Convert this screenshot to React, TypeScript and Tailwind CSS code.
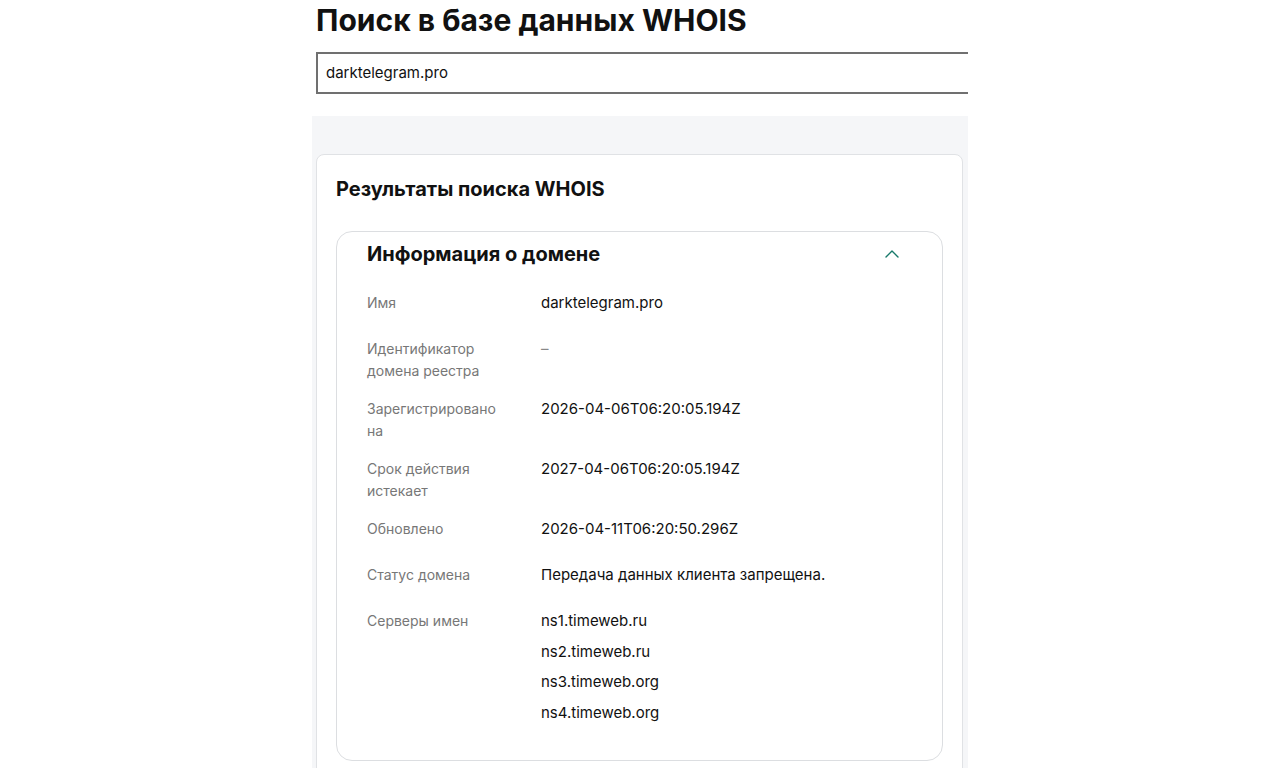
import { ChevronUp } from 'lucide-react';

const rows: { label: string; value: string[] }[] = [
  { label: 'Имя', value: ['darktelegram.pro'] },
  { label: 'Идентификатор домена реестра', value: ['–'] },
  { label: 'Зарегистрировано на', value: ['2026-04-06T06:20:05.194Z'] },
  { label: 'Срок действия истекает', value: ['2027-04-06T06:20:05.194Z'] },
  { label: 'Обновлено', value: ['2026-04-11T06:20:50.296Z'] },
  { label: 'Статус домена', value: ['Передача данных клиента запрещена.'] },
  {
    label: 'Серверы имен',
    value: ['ns1.timeweb.ru', 'ns2.timeweb.ru', 'ns3.timeweb.org', 'ns4.timeweb.org'],
  },
];

export default function App() {
  return (
    <div className="min-h-[768px] bg-white font-['Inter',sans-serif] text-[#111]">
      <div className="mx-auto w-[656px] overflow-hidden">
        <div className="pl-1">
          <h1 className="pt-[3px] text-[30px] leading-[34px] font-bold text-[#111]">
            Поиск в базе данных WHOIS
          </h1>
          <div className="mt-[15px] flex h-[42px] w-[700px] items-center border-2 border-[#707070] px-[8px] text-[15px]">
            darktelegram.pro
          </div>
        </div>

        <section className="mt-[22px] min-h-[660px] bg-[#f5f6f8] pt-[38px] pr-[5px] pl-1">
          <div className="rounded-lg border border-[#e0e2e5] bg-white px-[19px] pt-[20px] pb-6">
            <h2 className="text-[20px] leading-[28px] font-bold text-[#111]">Результаты поиска WHOIS</h2>

            <div className="mt-[28px] rounded-2xl border border-[#dcdee1] pt-[9px] pb-[36px] pl-[30px] pr-[38px]">
              <div className="flex items-center justify-between">
                <h3 className="text-[20px] leading-[26px] font-bold text-[#111]">Информация о домене</h3>
                <ChevronUp className="h-6 w-6 text-[#17796a]" strokeWidth={1.4} />
              </div>

              <div className="mt-[25px] flex flex-col gap-4">
                {rows.map((r) => (
                  <div key={r.label} className="flex min-h-[30px] leading-[22px]">
                    <div className="w-[174px] shrink-0 pr-[30px] text-[14px] text-[#777]">{r.label}</div>
                    <div className="flex flex-col gap-[8.5px] text-[15px] text-[#111]">
                      {r.value.map((v) => (
                        <div key={v} className={v === '–' ? 'text-[#888]' : ''}>
                          {v}
                        </div>
                      ))}
                    </div>
                  </div>
                ))}
              </div>
            </div>
          </div>
        </section>
      </div>
    </div>
  );
}
